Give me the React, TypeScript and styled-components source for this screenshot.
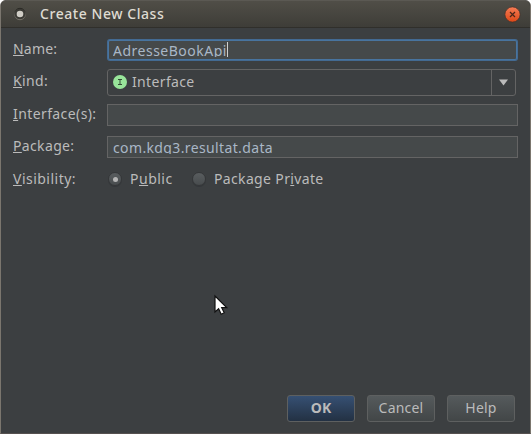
import React from 'react';
import styled, { createGlobalStyle } from 'styled-components';

const GlobalStyle = createGlobalStyle`
  * { box-sizing: border-box; }
  html, body { margin: 0; padding: 0; background: #fff; overflow: hidden; }
`;

const Dialog = styled.main`
  position: relative;
  display: flex;
  flex-direction: column;
  width: 531px;
  height: 434px;
  overflow: hidden;
  background: #3c3f41;
  border: solid #7b766e;
  border-width: 0 1px 0;
  border-bottom: 1px solid #55504f;
  border-radius: 6px 6px 0 0;
  color: #bbbbbb;
  font: 14px/20px 'Noto Sans', sans-serif;
`;

const TitleBar = styled.header`
  display: flex;
  flex: none;
  align-items: center;
  height: 28px;
  margin: 0 -1px;
  padding: 0 9px 0 12px;
  border: 1px solid #34332e;
  border-top-color: #5b5953;
  border-bottom-color: #302f2b;
  border-radius: 6px 6px 0 0;
  background: linear-gradient(#504e47, #3e3d38);
`;

const Title = styled.h1`
  flex: 1;
  margin: 0 0 0 13px;
  color: #dfdbd2;
  font-size: 14px;
  font-weight: 500;
  line-height: 20px;
  letter-spacing: 0.55px;
`;

const Form = styled.form`
  display: flex;
  flex-direction: column;
  flex: 1;
  padding: 11px 12px 11px;
`;

const Row = styled.div<{ $height: number; $gap: number }>`
  display: grid;
  grid-template-columns: 94px 1fr;
  height: ${(p) => p.$height}px;
  margin-bottom: ${(p) => p.$gap}px;
`;

const Text = styled.span<{ $spacing?: number }>`
  white-space: pre;
  letter-spacing: ${(p) => p.$spacing ?? 0}px;
`;

const Label = styled(Text)<{ $top?: number }>`
  margin-top: ${(p) => p.$top ?? 0}px;
`;

const Mnemonic = styled.span`
  text-decoration: underline 1px;
  text-underline-offset: 1px;
  text-decoration-skip-ink: none;
`;

const Field = styled.div<{ $focused?: boolean }>`
  height: ${(p) => (p.$focused ? 20 : 22)}px;
  margin: ${(p) => (p.$focused ? '1px 1px 0' : '0')};
  padding: ${(p) => (p.$focused ? '0 4px' : '1px 5px 0')};
  overflow: hidden;
  border: 1px solid ${(p) => (p.$focused ? '#48749f' : '#646464')};
  border-radius: ${(p) => (p.$focused ? 2 : 0)}px;
  box-shadow: ${(p) => (p.$focused ? '0 0 0 1px #436a92' : 'none')};
  background: #45494a;
  color: #a9b7c6;
`;

const Clip = styled.div`
  display: flex;
  height: 16px;
  overflow: hidden;
`;

const Caret = styled.i`
  width: 1px;
  height: 15px;
  margin-top: 1px;
  background: #d0d0d0;
`;

const Combo = styled.div`
  display: flex;
  align-items: center;
  height: 27px;
  margin-right: 2px;
  padding-left: 5px;
  border: 1px solid #646464;
  border-radius: 3px;
`;

const ComboValue = styled.div`
  display: flex;
  flex: 1;
  align-items: center;
  gap: 5px;
  margin-top: -1px;
`;

const Arrow = styled.div`
  display: flex;
  align-items: center;
  justify-content: center;
  width: 24px;
  height: 25px;
  padding-right: 1px;
  border-left: 1px solid #646464;
`;

const RadioGroup = styled.div`
  display: flex;
  align-items: flex-start;
`;

const Radio = styled.label<{ $width: number }>`
  display: flex;
  gap: 8px;
  width: ${(p) => p.$width}px;
  padding-left: 1px;
`;

const Dial = styled.span`
  display: flex;
  flex: none;
  align-items: center;
  justify-content: center;
  width: 14px;
  height: 14px;
  margin-top: 3px;
  border: 1px solid #353739;
  border-radius: 50%;
  background: linear-gradient(#595d5f, #484c4e);
  box-shadow: 0 1px 0 #34373a;
`;

const Dot = styled.i`
  width: 5px;
  height: 5px;
  border-radius: 50%;
  background: #b5b5b5;
`;

const Actions = styled.footer`
  display: flex;
  gap: 12px;
  justify-content: flex-end;
  margin-top: auto;
  padding-right: 3px;
`;

const Button = styled.button<{ $primary?: boolean }>`
  width: 68px;
  height: 27px;
  padding: 0 0 1px;
  border: 1px solid #5e6060;
  border-radius: 3px;
  background: ${(p) => (p.$primary ? 'linear-gradient(#365073, #233143)' : 'linear-gradient(#555a5c, #424647)')};
  color: #bbbbbb;
  font: ${(p) => (p.$primary ? 700 : 400)} 14px/20px 'Noto Sans', sans-serif;
`;

const Pointer = styled.svg`
  position: absolute;
  left: 212px;
  top: 294px;
`;

const MenuIcon = () => (
  <svg width="14" height="14" viewBox="0 0 14 14">
    <defs>
      <linearGradient id="menuRing" x1="0" y1="0" x2="0" y2="1">
        <stop offset="0" stopColor="#292824" />
        <stop offset="1" stopColor="#77736b" />
      </linearGradient>
    </defs>
    <circle cx="7" cy="7" r="5.7" fill="#3b3a35" stroke="url(#menuRing)" />
    <circle cx="7" cy="7" r="3.3" fill="#d0cdc6" />
  </svg>
);

const CloseIcon = () => (
  <svg width="17" height="17" viewBox="0 0 17 17">
    <defs>
      <linearGradient id="closeFill" x1="0" y1="0" x2="0" y2="1">
        <stop offset="0" stopColor="#f57c55" />
        <stop offset="1" stopColor="#dd4817" />
      </linearGradient>
    </defs>
    <circle cx="8.5" cy="8.5" r="7.6" fill="url(#closeFill)" stroke="#46312a" strokeWidth=".7" />
    <path d="M6 6l5 5M11 6l-5 5" stroke="#4b2619" strokeWidth="1.2" />
  </svg>
);

const InterfaceIcon = () => (
  <svg width="14" height="14" viewBox="0 0 14 14">
    <circle cx="7" cy="7" r="7" fill="#98e59a" />
    <path d="M5 4.5h4M5 9.5h4M7 4.5v5" stroke="#344b36" strokeWidth="1" />
  </svg>
);

export default function App() {
  return (
    <>
      <GlobalStyle />
      <Dialog>
        <TitleBar>
          <MenuIcon />
          <Title>Create New Class</Title>
          <CloseIcon />
        </TitleBar>
        <Form>
          <Row $height={22} $gap={8}>
            <Label $spacing={0.2}><Mnemonic>N</Mnemonic>ame:</Label>
            <Field $focused>
              <Clip><Text $spacing={0.5}>AdresseBookApi</Text><Caret /></Clip>
            </Field>
          </Row>
          <Row $height={27} $gap={8}>
            <Label $top={2} $spacing={0.35}><Mnemonic>K</Mnemonic>ind:</Label>
            <Combo>
              <ComboValue><InterfaceIcon /><Text $spacing={0.35}>Interface</Text></ComboValue>
              <Arrow><svg width="9" height="7"><path d="M0 .5h9L4.5 6.5z" fill="#bbb" /></svg></Arrow>
            </Combo>
          </Row>
          <Row $height={22} $gap={10}>
            <Label $spacing={0.4}><Mnemonic>I</Mnemonic>nterface(s):</Label>
            <Field />
          </Row>
          <Row $height={22} $gap={11}>
            <Label $spacing={0.35}><Mnemonic>P</Mnemonic>ackage:</Label>
            <Field><Clip><Text $spacing={0.37}>com.kdq3.resultat.data</Text></Clip></Field>
          </Row>
          <Row $height={22} $gap={0}>
            <Label $spacing={0.48}><Mnemonic>V</Mnemonic>isibility:</Label>
            <RadioGroup>
              <Radio $width={84}><Dial><Dot /></Dial><Text $spacing={0.5}>P<Mnemonic>u</Mnemonic>blic</Text></Radio>
              <Radio $width={150}><Dial /><Text $spacing={0.35}>Package Pr<Mnemonic>i</Mnemonic>vate</Text></Radio>
            </RadioGroup>
          </Row>
          <Actions>
            <Button type="button" $primary>OK</Button>
            <Button type="button"><Text $spacing={0.2}>Cancel</Text></Button>
            <Button type="button"><Text $spacing={0.2}>Help</Text></Button>
          </Actions>
        </Form>
        <Pointer width="16" height="24" viewBox="0 0 16 24">
          <path d="M2 2v16l3.6-3.2 2.6 5.4 3-1.4-2.5-5.1h5z" fill="#fff" stroke="#111" strokeWidth="1.2" />
        </Pointer>
      </Dialog>
    </>
  );
}
